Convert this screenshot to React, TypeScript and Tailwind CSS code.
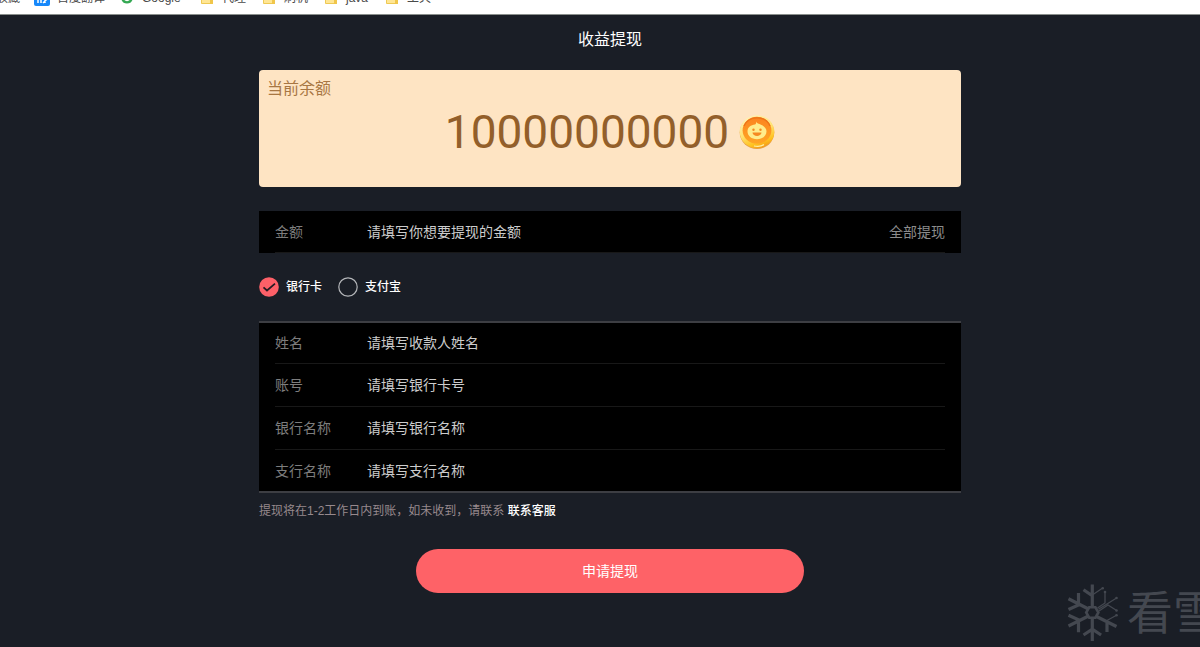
import { useState, type ReactNode } from "react";

function Folder() {
  return (
    <svg className="h-3 w-3 shrink-0" viewBox="0 0 12 12" aria-hidden="true">
      <path d="M0.5 1h5l1 1.500h5v9h-11z" fill="#ffe694" stroke="#eec954" />
      <path d="M9 8h3v4H9z" fill="#f0c64a" />
    </svg>
  );
}

function TranslateMark() {
  return (
    <svg className="h-4 w-4 shrink-0" viewBox="0 0 16 16" aria-hidden="true">
      <rect width="16" height="16" rx="2" fill="#1688fa" />
      <path d="M4 13V7h3v6M9 8h4M11 6v7M9 13l4-4" stroke="#fff" strokeWidth="1.5" fill="none" />
    </svg>
  );
}

function GoogleMark() {
  return (
    <svg className="h-3 w-3 shrink-0" viewBox="0 0 12 12" aria-hidden="true">
      <path d="M2 3a5 5 0 0 1 8 0" stroke="#ea4335" strokeWidth="2.200" fill="none" />
      <path d="M1.500 7a4.700 4.700 0 0 0 9 0" stroke="#34a853" strokeWidth="2.400" fill="none" />
      <path d="M6 6h5" stroke="#4285f4" strokeWidth="2" />
    </svg>
  );
}

function Bookmark({ icon, label, className }: { icon?: ReactNode; label: string; className: string }) {
  return (
    <a href="#" className={`flex shrink-0 items-center ${className}`}>
      {icon}
      <span>{label}</span>
    </a>
  );
}

function BookmarkBar() {
  return (
    <nav
      aria-label="书签"
      className="flex h-[15px] items-end overflow-hidden border-b border-[#8a8f8c] bg-white pb-2 text-xs leading-4 text-[#4a4a4a]"
    >
      <div className="flex w-full">
        <Bookmark label="收藏" className="-ml-1 w-[38px]" />
        <Bookmark icon={<TranslateMark />} label="百度翻译" className="w-[87px] gap-[7px]" />
        <Bookmark icon={<GoogleMark />} label="Google" className="w-[80px] gap-[9px]" />
        <Bookmark icon={<Folder />} label="代理" className="w-[62px] gap-[9px]" />
        <Bookmark icon={<Folder />} label="刷机" className="w-[62px] gap-[9px]" />
        <Bookmark icon={<Folder />} label="java" className="w-[61px] gap-[9px]" />
        <Bookmark icon={<Folder />} label="工具" className="gap-[9px]" />
      </div>
    </nav>
  );
}

function Coin() {
  return (
    <svg className="h-9 w-9 shrink-0" viewBox="0 0 36 36" aria-hidden="true">
      <defs>
        <linearGradient id="rim" x1="0.200" y1="0" x2="0.600" y2="1">
          <stop offset="0" stopColor="#fff3bd" />
          <stop offset="0.500" stopColor="#ffe375" />
          <stop offset="0.850" stopColor="#ffc11d" />
          <stop offset="1" stopColor="#f59a17" />
        </linearGradient>
        <linearGradient id="core" x1="0" y1="0" x2="0" y2="1">
          <stop offset="0" stopColor="#fb8320" />
          <stop offset="1" stopColor="#ffa624" />
        </linearGradient>
      </defs>
      <ellipse cx="18" cy="18.500" rx="17.300" ry="16.500" fill="#e6a04a" />
      <ellipse cx="18" cy="17.700" rx="17.300" ry="16.500" fill="url(#rim)" />
      <path d="M15 32c4 .8 8 0 10-1.500" stroke="#fff0a8" strokeWidth="1.200" fill="none" />
      <ellipse cx="18" cy="16.300" rx="14.400" ry="13.500" fill="url(#core)" />
      <path d="M5 12a14 13 0 0 1 26 0" stroke="#ed7419" strokeWidth="1.300" fill="none" />
      <path
        d="M17 7.500c.6 2 3 2.200 5 3.200 3.400 1.500 5.500 3.800 5.500 6.600 0 4.700-4 7.900-9.500 7.900s-9.500-3.200-9.500-7.900c0-4 3.500-6.300 7.500-6.800 1-.2 1.200-1.500 1-3z"
        fill="#ffec8c"
      />
      <circle cx="14.500" cy="15.800" r="1.200" fill="#f58a21" />
      <circle cx="21.500" cy="15.800" r="1.200" fill="#f58a21" />
      <path d="M13.500 18.500h9c-.3 4.500-8.700 4.500-9 0z" fill="#f58a21" />
    </svg>
  );
}

function Field({ id, label, placeholder, children }: { id: string; label: string; placeholder: string; children?: ReactNode }) {
  return (
    <div className="flex h-full items-center border-b border-[#181818]">
      <label htmlFor={id} className="w-[92px] shrink-0 text-[#7d7d7d]">
        {label}
      </label>
      <input
        id={id}
        type="text"
        placeholder={placeholder}
        className="min-w-0 flex-1 bg-transparent text-[#cccccc] outline-none placeholder:text-[#cccccc]"
      />
      {children}
    </div>
  );
}

function Method({ label, checked, onSelect }: { label: string; checked: boolean; onSelect: () => void }) {
  return (
    <label className="flex cursor-pointer items-center gap-[7px] text-xs leading-5 font-medium text-white">
      <input type="radio" name="method" checked={checked} onChange={onSelect} className="peer sr-only" />
      <svg className="h-5 w-5 shrink-0" viewBox="0 0 20 20" aria-hidden="true">
        {checked ? (
          <>
            <circle cx="10" cy="10" r="9.800" fill="#fd6068" />
            <path d="M4.500 10.300l3.500 3.200 8-6.800" stroke="#251b22" strokeWidth="1.700" fill="none" />
          </>
        ) : (
          <circle cx="10" cy="10" r="9.200" fill="none" stroke="#b4b6b9" strokeWidth="1.200" />
        )}
      </svg>
      {label}
    </label>
  );
}

function Watermark() {
  return (
    <div className="pointer-events-none absolute right-0 bottom-0 flex h-[68px] w-[134px] items-center gap-[9px] overflow-hidden text-[#444850]">
      <svg className="h-[58px] w-[52px] shrink-0" viewBox="0 0 52 58" fill="none" stroke="currentColor" aria-hidden="true">
        <g strokeWidth="3.200">
          <path d="M23.200 23.300h6.200l3 5.200-3 5.200h-6.200l-3-5.200z" strokeWidth="2.600" />
          <path d="M26.300 23.300V.5M17.500 5.800l8.800 6M22.500 25L2.500 14.800M12.500 9v12L2.500 25.500M22.500 32L2.500 42M2.500 31.200l10 4.500v12.500M26.300 33.700V57M17.500 51l8.800-5.800 8.800 5.800M30 32.200l20.500 10.300M41 48V37" />
        </g>
        <g strokeWidth="1.300">
          <path d="M26.300 11l10.400-7M39 7.700V19l-7.500 5M32.500 25.200L51 13.700M33 27l9-6 9 5.700M40 37l11-6" />
        </g>
        <g fill="currentColor" stroke="none">
          <circle cx="36.700" cy="4.200" r="1.300" />
          <circle cx="39" cy="8" r="1.300" />
          <circle cx="50.500" cy="14" r="1.300" />
          <circle cx="50.500" cy="26.500" r="1.300" />
          <circle cx="50.500" cy="31.200" r="1.300" />
        </g>
      </svg>
      <span className="shrink-0 text-[46px] leading-none whitespace-nowrap">看雪</span>
    </div>
  );
}

const bankFields = [
  { id: "name", label: "姓名", placeholder: "请填写收款人姓名" },
  { id: "account", label: "账号", placeholder: "请填写银行卡号" },
  { id: "bank", label: "银行名称", placeholder: "请填写银行名称" },
  { id: "branch", label: "支行名称", placeholder: "请填写支行名称" },
];

export default function App() {
  const [method, setMethod] = useState("bank");

  return (
    <div className="relative min-h-screen overflow-hidden bg-[#1a1e26] font-['Liberation_Sans','Noto_Sans_CJK_SC',sans-serif] text-sm">
      <BookmarkBar />
      <main className="pl-5">
        <div className="mx-auto max-w-[702px]">
          <h1 className="mb-[5px] flex h-[50px] items-center justify-center text-base text-white">收益提现</h1>

          <section className="h-[117px] rounded bg-[#fee4c3] px-2 pt-[7px] text-[#935f2a]">
            <h2 className="text-base leading-6 text-[#a87743]">当前余额</h2>
            <div className="flex items-center justify-center gap-2.5">
              <span className="font-['Roboto',sans-serif] text-[46px] leading-[62px]">10000000000</span>
              <Coin />
            </div>
          </section>

          <form onSubmit={(e) => e.preventDefault()}>
            <div className="mt-6 h-[42px] bg-black px-4">
              <Field id="amount" label="金额" placeholder="请填写你想要提现的金额">
                <button type="button" className="text-[#8c8c8c]">
                  全部提现
                </button>
              </Field>
            </div>

            <div className="my-6 flex gap-4">
              <Method label="银行卡" checked={method === "bank"} onSelect={() => setMethod("bank")} />
              <Method label="支付宝" checked={method === "alipay"} onSelect={() => setMethod("alipay")} />
            </div>

            <div className="bg-black px-4 shadow-[inset_0_2px_#3d3e43,inset_0_-2px_#3d3e43]">
              {bankFields.map((field) => (
                <div key={field.id} className="h-[43px] first:pt-0.5 last:*:border-transparent">
                  <Field {...field} />
                </div>
              ))}
            </div>

            <p className="mt-2 text-xs leading-5 text-[#97898d]">
              提现将在1-2工作日内到账，如未收到，请联系{" "}
              <a href="#" className="font-medium text-white">
                联系客服
              </a>
            </p>

            <div className="mt-7 flex justify-center">
              <button type="submit" className="h-11 w-full max-w-[388px] rounded-full bg-[#fe6267] text-white">
                申请提现
              </button>
            </div>
          </form>
        </div>
      </main>
      <Watermark />
    </div>
  );
}
